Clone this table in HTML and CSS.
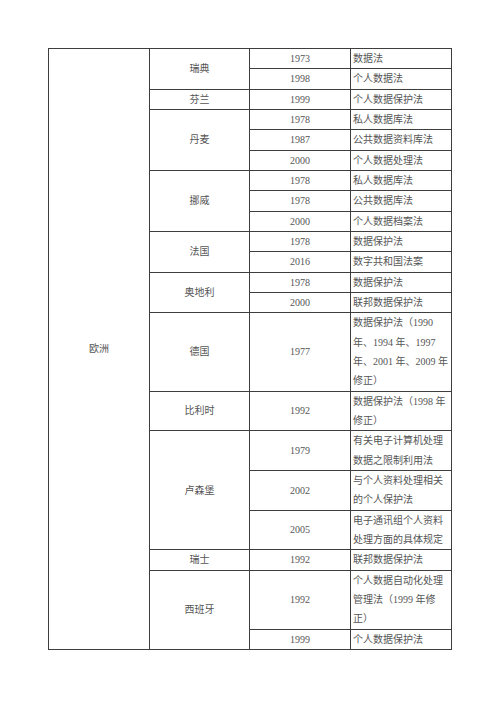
FILE: index.html
```html
<!DOCTYPE html>
<html lang="zh">
<head>
<meta charset="utf-8">
<link rel="stylesheet" href="styles.css">
</head>
<body>
<table class="laws">
<colgroup><col class="c1"><col class="c2"><col class="c3"><col class="c4"></colgroup>
<tbody>
<tr><td class="region" rowspan="21">欧洲</td><td class="country" rowspan="2">瑞典</td><td class="year">1973</td><td class="law">数据法</td></tr>
<tr><td class="year">1998</td><td class="law">个人数据法</td></tr>
<tr><td class="country">芬兰</td><td class="year">1999</td><td class="law">个人数据保护法</td></tr>
<tr><td class="country" rowspan="3">丹麦</td><td class="year">1978</td><td class="law">私人数据库法</td></tr>
<tr><td class="year">1987</td><td class="law">公共数据资料库法</td></tr>
<tr><td class="year">2000</td><td class="law">个人数据处理法</td></tr>
<tr><td class="country" rowspan="3">挪威</td><td class="year">1978</td><td class="law">私人数据库法</td></tr>
<tr><td class="year">1978</td><td class="law">公共数据库法</td></tr>
<tr><td class="year">2000</td><td class="law">个人数据档案法</td></tr>
<tr><td class="country" rowspan="2">法国</td><td class="year">1978</td><td class="law">数据保护法</td></tr>
<tr><td class="year">2016</td><td class="law">数字共和国法案</td></tr>
<tr><td class="country" rowspan="2">奥地利</td><td class="year">1978</td><td class="law">数据保护法</td></tr>
<tr><td class="year">2000</td><td class="law">联邦数据保护法</td></tr>
<tr><td class="country">德国</td><td class="year">1977</td><td class="law">数据保护法（1990<br>年、1994 年、1997<br>年、2001 年、2009 年<br>修正）</td></tr>
<tr><td class="country">比利时</td><td class="year">1992</td><td class="law">数据保护法（1998 年<br>修正）</td></tr>
<tr><td class="country" rowspan="3">卢森堡</td><td class="year">1979</td><td class="law">有关电子计算机处理<br>数据之限制利用法</td></tr>
<tr><td class="year">2002</td><td class="law">与个人资料处理相关<br>的个人保护法</td></tr>
<tr><td class="year">2005</td><td class="law">电子通讯组个人资料<br>处理方面的具体规定</td></tr>
<tr><td class="country">瑞士</td><td class="year">1992</td><td class="law">联邦数据保护法</td></tr>
<tr><td class="country" rowspan="2">西班牙</td><td class="year">1992</td><td class="law">个人数据自动化处理<br>管理法（1999 年修<br>正）</td></tr>
<tr><td class="year">1999</td><td class="law">个人数据保护法</td></tr>
</tbody>
</table>
</body>
</html>
```
FILE: styles.css
```css
html, body {
  margin: 0;
  padding: 0;
  background: #ffffff;
}
body {
  padding: 48px 0 0 48px;
}
.laws {
  border-collapse: collapse;
  table-layout: fixed;
  width: 403px;
  font-family: "Liberation Serif", "Noto Sans CJK SC", serif;
  font-size: 10px;
  line-height: 19.33px;
  color: #555555;
}
.c1 { width: 101px; }
.c2 { width: 100px; }
.c3 { width: 101px; }
.c4 { width: 101px; }
.laws td {
  border: 1px solid #3e3e3e;
  padding: 0;
  vertical-align: middle;
}
.region, .country, .year {
  text-align: center;
}
.law {
  text-align: left;
  padding-left: 2px !important;
  white-space: nowrap;
}
```
